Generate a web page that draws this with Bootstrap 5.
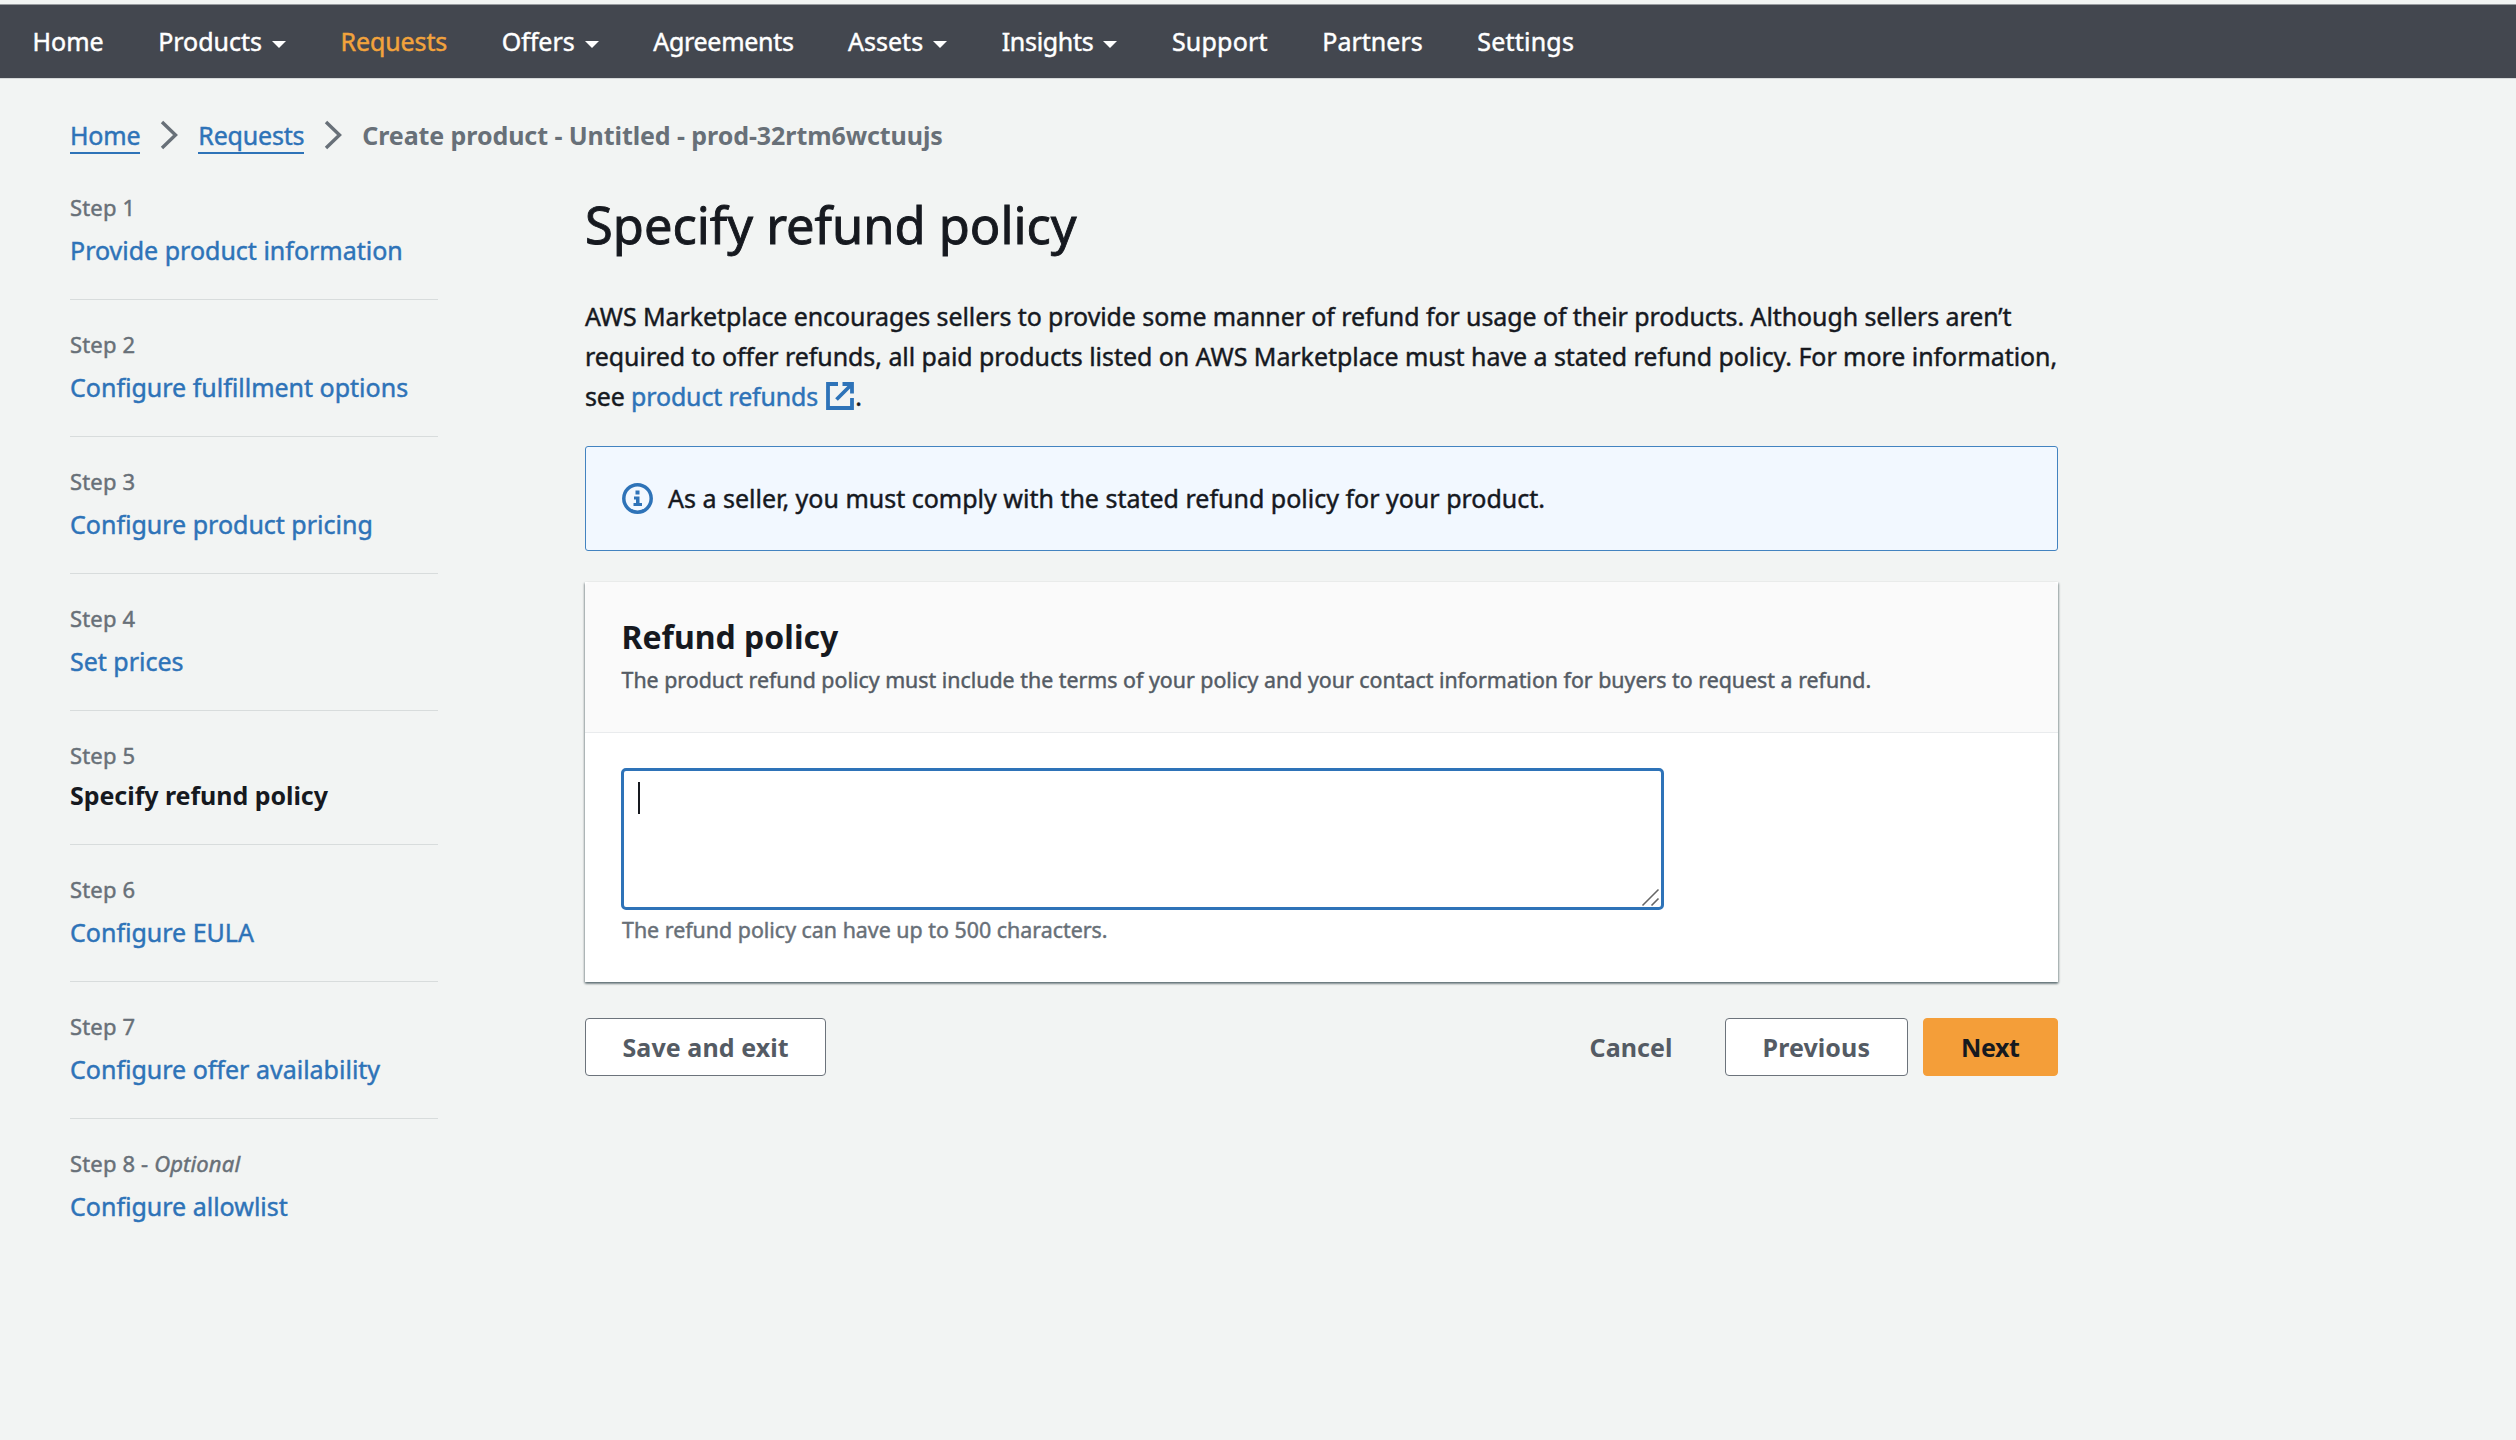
<!DOCTYPE html>
<html lang="en">
<head>
<meta charset="utf-8">
<meta name="viewport" content="width=device-width, initial-scale=1">
<title>Specify refund policy</title>
<link rel="stylesheet" href="https://cdn.jsdelivr.net/npm/bootstrap@5.3.0/dist/css/bootstrap.min.css">
<style>
  body { background: #f2f4f3; color: #16191f; font: 400 25px/40px "Noto Sans", sans-serif; -webkit-text-stroke: .45px currentColor; min-height: 1440px; }
  a { color: #2e73b8; text-decoration: none; }
  .topbar { height: 75px; margin-top: 4px; padding: 0 0 1px 32.5px; background: #43474f; border-top: 1px solid #989b9f; border-bottom: 1px solid #d5d8d9; }
  .topbar .navbar-nav { gap: 54.5px; }
  .topbar .navbar-nav .nav-link { color: #fff; padding: 0; line-height: 40px; }
  .topbar .navbar-nav .nav-link.active { color: #f2a33c; letter-spacing: -.12px; }
  .topbar .nav-link.tight { letter-spacing: -.3px; }
  .topbar .nav-link.loose { letter-spacing: .22px; }
  .topbar .dropdown-toggle::after { border: 7px solid transparent; border-top: 7.5px solid #fff; border-bottom: 0; margin-left: 10px; vertical-align: 3px; }
  .crumbs { padding: 37px 0 0 70px; height: 76px; }
  .crumbs .breadcrumb { font-size: 25px; line-height: 38px; letter-spacing: -.2px; }
  .crumbs a { border-bottom: 2px solid #2e73b8; }
  .crumbs svg { width: 18px; height: 30px; margin: 0 20px; }
  .crumbs .current { color: #687078; font-weight: 700; letter-spacing: -.08px; -webkit-text-stroke: 0; }
  .page-grid { padding: 37px 0 0 70px; gap: 147px; }
  .steps { width: 368px; }
  .steps li { padding: 29px 0 29px 0; border-bottom: 1px solid #d8dcdc; }
  .steps li:first-child { padding-top: 0; }
  .steps li:last-child { border: 0; }
  .steps .step-no { font-size: 22px; line-height: 30px; letter-spacing: .15px; color: #687078; margin-bottom: 8px; }
  .steps .on .step-no { margin-bottom: 5px; }
  .steps .on strong { font-weight: 700; -webkit-text-stroke: 0; letter-spacing: -.05px; display: block; }
  .content-col { width: 1473px; }
  h1 { font-size: 50.6px; line-height: 64px; font-weight: 400; margin: 1px 0 39px; -webkit-text-stroke: .9px; }
  .intro { font-size: 24.93px; line-height: 40.1px; letter-spacing: -.02px; margin: 0 0 29.5px; white-space: nowrap; }
  .intro .row-a { letter-spacing: -.06px; }
  .intro .row-c { letter-spacing: -.12px; }
  .intro svg { width: 28px; height: 28px; margin: -7px 1px 0 8px; }
  .notice { height: 105.5px; margin: 0 0 30.5px; padding: 0 0 0 36px; background: #f2f8ff; border: 1px solid #4383c0; border-radius: 3px; color: inherit; }
  .notice svg { width: 31px; height: 31px; margin-right: 15px; }
  .notice span { padding-bottom: 2px; }
  .panel { border: 0; border-radius: 0; color: inherit; background: #fff; box-shadow: 0 2px 2px rgba(0,28,36,.34), 1px 1px 2px rgba(0,28,36,.28), -1px 1px 2px rgba(0,28,36,.26); height: 400px; }
  .panel .card-header { height: 151px; padding: 35.5px 36.5px 0; background: #fafafa; border-bottom: 1px solid #e9ebed; }
  h2 { font-size: 32px; line-height: 40px; font-weight: 700; margin: 0 0 7px; -webkit-text-stroke: 0; }
  .sub-text { font-size: 21.36px; line-height: 32px; color: #545b64; }
  .panel .card-body { padding: 35px 35.5px 0; }
  .field-wrap { width: 1043px; height: 142px; }
  .field-wrap textarea, .field-wrap textarea:focus { height: 142px; border: 3px solid #2e73b8; border-radius: 5px; resize: none; box-shadow: none; }
  .text-caret { position: absolute; left: 17px; top: 14px; width: 2px; height: 32px; background: #16191f; }
  .grip { position: absolute; right: 4px; bottom: 3px; width: 19px; height: 19px; }
  .hint { color: #687078; font-size: 21.4px; line-height: 32px; margin: 4px 0 0 1.5px; }
  .actions { margin-top: 36px; }
  .actions .btn { height: 58px; padding: 0 36.5px; border-radius: 4px; font: 700 25px/54px "Noto Sans", sans-serif; color: #545b64; border: 1px solid #6c737b; background: #fff; -webkit-text-stroke: 0; letter-spacing: .08px; }
  .actions .btn.plain { background: none; border-color: transparent; margin-right: 15px; }
  .actions .btn.go { background: #f49e39; border-color: #f49e39; color: #16191f; padding: 0 37.5px; letter-spacing: -.4px; margin-left: 15px; }
</style>
</head>
<body>
<nav class="navbar navbar-expand topbar">
  <ul class="navbar-nav">
    <li class="nav-item"><a class="nav-link" href="#">Home</a></li>
    <li class="nav-item dropdown"><a class="nav-link dropdown-toggle" href="#">Products</a></li>
    <li class="nav-item"><a class="nav-link active" href="#">Requests</a></li>
    <li class="nav-item dropdown"><a class="nav-link dropdown-toggle" href="#">Offers</a></li>
    <li class="nav-item"><a class="nav-link tight" href="#">Agreements</a></li>
    <li class="nav-item dropdown"><a class="nav-link dropdown-toggle" href="#">Assets</a></li>
    <li class="nav-item dropdown"><a class="nav-link dropdown-toggle tight" href="#">Insights</a></li>
    <li class="nav-item"><a class="nav-link loose" href="#">Support</a></li>
    <li class="nav-item"><a class="nav-link" href="#">Partners</a></li>
    <li class="nav-item"><a class="nav-link loose" href="#">Settings</a></li>
  </ul>
</nav>

<nav class="crumbs" aria-label="breadcrumb">
  <ol class="breadcrumb m-0 align-items-center">
    <li><a href="#">Home</a></li>
    <li class="d-flex"><svg viewBox="0 0 18 30" fill="none" stroke="#687078" stroke-width="3.4"><path d="M2 2l13.5 13L2 28"/></svg></li>
    <li><a href="#">Requests</a></li>
    <li class="d-flex"><svg viewBox="0 0 18 30" fill="none" stroke="#687078" stroke-width="3.4"><path d="M2 2l13.5 13L2 28"/></svg></li>
    <li class="current">Create product - Untitled - prod-32rtm6wctuujs</li>
  </ol>
</nav>

<div class="page-grid d-flex align-items-start">
  <ol class="steps list-unstyled m-0 flex-shrink-0">
    <li><div class="step-no">Step 1</div><a class="d-block" href="#">Provide product information</a></li>
    <li><div class="step-no">Step 2</div><a class="d-block" href="#">Configure fulfillment options</a></li>
    <li><div class="step-no">Step 3</div><a class="d-block" href="#">Configure product pricing</a></li>
    <li><div class="step-no">Step 4</div><a class="d-block" href="#">Set prices</a></li>
    <li class="on"><div class="step-no">Step 5</div><strong>Specify refund policy</strong></li>
    <li><div class="step-no">Step 6</div><a class="d-block" href="#">Configure EULA</a></li>
    <li><div class="step-no">Step 7</div><a class="d-block" href="#">Configure offer availability</a></li>
    <li><div class="step-no">Step 8 - <em>Optional</em></div><a class="d-block" href="#">Configure allowlist</a></li>
  </ol>

  <main class="content-col flex-shrink-0">
    <h1>Specify refund policy</h1>
    <p class="intro"><span class="row-a">AWS Marketplace encourages sellers to provide some manner of refund for usage of their products. Although sellers aren’t</span><br>required to offer refunds, all paid products listed on AWS Marketplace must have a stated refund policy. For more information,<br><span class="row-c">see <a href="#">product refunds<svg viewBox="0 0 28 28" fill="none" stroke="currentColor" stroke-width="3.8"><path d="M12 2H2v24h24V16M16.5 2H26v9.500M26 2L10.500 17.500"/></svg></a>.</span></p>

    <div class="notice alert d-flex align-items-center">
      <svg viewBox="0 0 31 31"><circle cx="15.5" cy="15.5" r="13.7" fill="none" stroke="#2e73b8" stroke-width="3.5"/><path fill="#2e73b8" d="M13.500 7.500h4v4h-4zM12 13.500h5.500v6.500H20v3h-8.500v-3h2.500v-3.500h-2z"/></svg>
      <span>As a seller, you must comply with the stated refund policy for your product.</span>
    </div>

    <section class="card panel">
      <div class="card-header">
        <h2>Refund policy</h2>
        <div class="sub-text text-nowrap">The product refund policy must include the terms of your policy and your contact information for buyers to request a refund.</div>
      </div>
      <div class="card-body">
        <div class="field-wrap position-relative">
          <textarea class="form-control" aria-label="Refund policy"></textarea>
          <span class="text-caret"></span>
          <svg class="grip" viewBox="0 0 19 19" stroke="#666" stroke-width="1.6" fill="none"><path d="M1.500 17.500L17.500 1.500M10.500 17.500l7-7"/></svg>
        </div>
        <div class="hint">The refund policy can have up to 500 characters.</div>
      </div>
    </section>

    <div class="actions d-flex">
      <button class="btn me-auto" type="button">Save and exit</button>
      <button class="btn plain" type="button">Cancel</button>
      <button class="btn" type="button">Previous</button>
      <button class="btn go" type="button">Next</button>
    </div>
  </main>
</div>
<script src="https://cdn.jsdelivr.net/npm/bootstrap@5.3.0/dist/js/bootstrap.bundle.min.js"></script>
</body>
</html>
